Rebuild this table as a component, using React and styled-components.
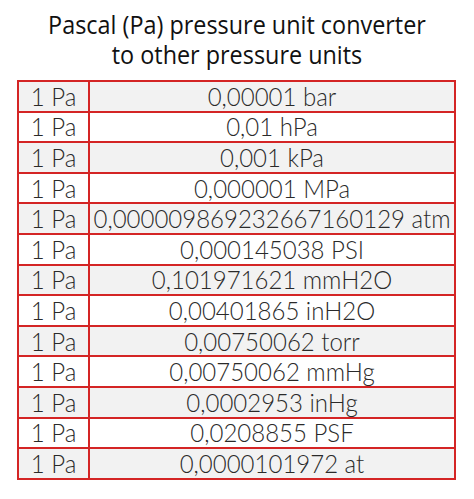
import React from "react";
import styled, { createGlobalStyle } from "styled-components";

const rows = [
  "0,00001 bar",
  "0,01 hPa",
  "0,001 kPa",
  "0,000001 MPa",
  "0,000009869232667160129 atm",
  "0,000145038 PSI",
  "0,101971621 mmH2O",
  "0,00401865 inH2O",
  "0,00750062 torr",
  "0,00750062 mmHg",
  "0,0002953 inHg",
  "0,0208855 PSF",
  "0,0000101972 at",
];

const GlobalStyle = createGlobalStyle`
  body {
    margin: 0;
    background: #fff;
  }
`;

const Page = styled.div`
  width: 474px;
  height: 499px;
  padding-top: 11px;
  box-sizing: border-box;
`;

const Title = styled.h1`
  margin: 0 0 11px;
  font-family: "Open Sans", sans-serif;
  font-weight: 400;
  font-size: 23.4px;
  line-height: 29px;
  color: #111;
  text-align: center;
  transform: scaleY(1.06);
`;

const Table = styled.table`
  margin-left: 17px;
  width: 439px;
  border-collapse: collapse;
  font-family: "Lato Light", Lato, sans-serif;
  font-weight: 300;
  font-size: 24px;
  color: #2a2a2a;
`;

const Row = styled.tr`
  height: 30.6px;
  background: ${(p) => (p.$shaded ? "#f2f2f2" : "#fff")};
`;

const Cell = styled.td`
  border: 2px solid #d42525;
  padding: 0 0 1px;
  text-align: center;
  line-height: 26px;
  white-space: nowrap;
  width: ${(p) => (p.$narrow ? "69px" : "auto")};
`;

/* the source image is slightly stretched vertically */
const Value = styled.span`
  display: inline-block;
  transform: scaleY(1.1);
`;

export default function App() {
  return (
    <Page>
      <GlobalStyle />
      <Title>
        Pascal (Pa) pressure unit converter
        <br />
        to other pressure units
      </Title>
      <Table>
        <tbody>
          {rows.map((value, i) => (
            <Row key={i} $shaded={i % 2 === 0}>
              <Cell $narrow>
                <Value>1 Pa</Value>
              </Cell>
              <Cell>
                <Value>{value}</Value>
              </Cell>
            </Row>
          ))}
        </tbody>
      </Table>
    </Page>
  );
}
